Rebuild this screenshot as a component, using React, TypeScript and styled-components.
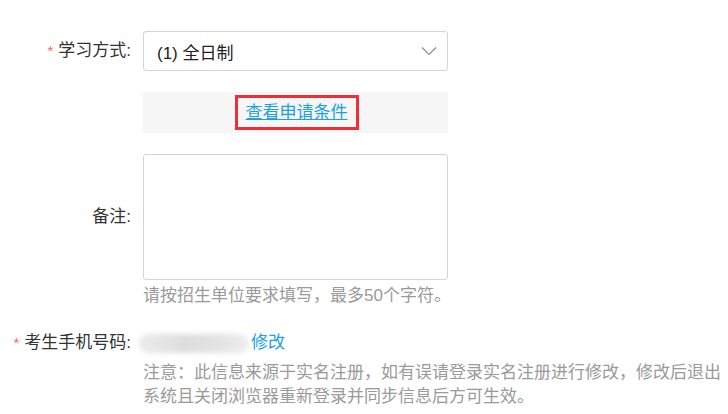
import styled, { createGlobalStyle } from 'styled-components';

const GlobalStyle = createGlobalStyle`
    html, body {
        margin: 0;
        padding: 0;
        background: #fff;
    }
    body {
        font-family: "Liberation Sans", "Noto Sans CJK SC", sans-serif;
        font-size: 17px;
        color: #333;
    }
`;

const Form = styled.div`
    padding-top: 31px;
    display: flex;
    flex-direction: column;
`;

const Row = styled.div<{ $gap?: number }>`
    display: grid;
    grid-template-columns: 143px 305px;
    align-items: center;
    margin-top: ${(p) => p.$gap || 0}px;
`;

const Label = styled.div`
    text-align: right;
    padding-right: 12px;
    line-height: 24px;
    color: #333;
    white-space: nowrap;
`;

const Star = styled.span`
    color: #f56c5a;
    margin-right: 5px;
    font-size: 15px;
`;

const Select = styled.div`
    height: 40px;
    box-sizing: border-box;
    border: 1px solid #d4d4d4;
    border-radius: 3px;
    display: flex;
    align-items: center;
    justify-content: space-between;
    padding: 0 10px 0 13px;
    color: #222;
`;

const Chevron = () => (
    <svg width="16" height="10" viewBox="0 0 16 10" fill="none">
        <path d="M1 1.5 L8 8.5 L15 1.5" stroke="#8a8a8a" strokeWidth="1.1" />
    </svg>
);

const InfoBox = styled.div`
    height: 41px;
    background: #f6f6f6;
    display: flex;
    justify-content: center;
    align-items: center;
`;

const Highlight = styled.span`
    display: inline-flex;
    align-items: center;
    height: 35px;
    box-sizing: border-box;
    border: 3px solid #ee2f35;
    padding: 0 8px;
    margin-left: 2px;
`;

const Link = styled.a<{ $plain?: boolean }>`
    color: #1ba1e2;
    text-decoration: ${(p) => (p.$plain ? 'none' : 'underline')};
    cursor: pointer;
    line-height: 24px;
`;

const TextArea = styled.textarea`
    height: 126px;
    width: 305px;
    box-sizing: border-box;
    border: 1px solid #d4d4d4;
    border-radius: 3px;
    resize: none;
    outline: none;
    display: block;
`;

const Hint = styled.div<{ $width?: number }>`
    color: #9a9a9a;
    line-height: 24px;
    width: ${(p) => p.$width || 320}px;
`;

const HintRow = styled.div<{ $gap: number }>`
    padding-left: 143px;
    margin-top: ${(p) => p.$gap}px;
`;

const Value = styled.div`
    display: flex;
    align-items: center;
    line-height: 24px;
    white-space: nowrap;
    margin-left: -4px;
`;

const Blurred = styled.span`
    display: inline-block;
    width: 110px;
    height: 19px;
    border-radius: 9px;
    background: linear-gradient(90deg, #ececec 0%, #dedede 40%, #e2e2e2 70%, #eeeeee 100%);
    filter: blur(2.5px);
    margin-right: 2px;
`;

export default function App() {
    return (
        <>
            <GlobalStyle />
            <Form>
                <Row>
                    <Label>
                        <Star>*</Star>学习方式:
                    </Label>
                    <Select>
                        <span>(1) 全日制</span>
                        <Chevron />
                    </Select>
                </Row>
                <Row $gap={21}>
                    <div />
                    <InfoBox>
                        <Highlight>
                            <Link>查看申请条件</Link>
                        </Highlight>
                    </InfoBox>
                </Row>
                <Row $gap={21}>
                    <Label>备注:</Label>
                    <TextArea />
                </Row>
                <HintRow $gap={4}>
                    <Hint>请按招生单位要求填写，最多50个字符。</Hint>
                </HintRow>
                <Row $gap={23}>
                    <Label>
                        <Star>*</Star>考生手机号码:
                    </Label>
                    <Value>
                        <Blurred />
                        <Link $plain>修改</Link>
                    </Value>
                </Row>
                <HintRow $gap={6}>
                    <Hint $width={578}>
                        注意：此信息来源于实名注册，如有误请登录实名注册进行修改，修改后退出系统且关闭浏览器重新登录并同步信息后方可生效。
                    </Hint>
                </HintRow>
            </Form>
        </>
    );
}
